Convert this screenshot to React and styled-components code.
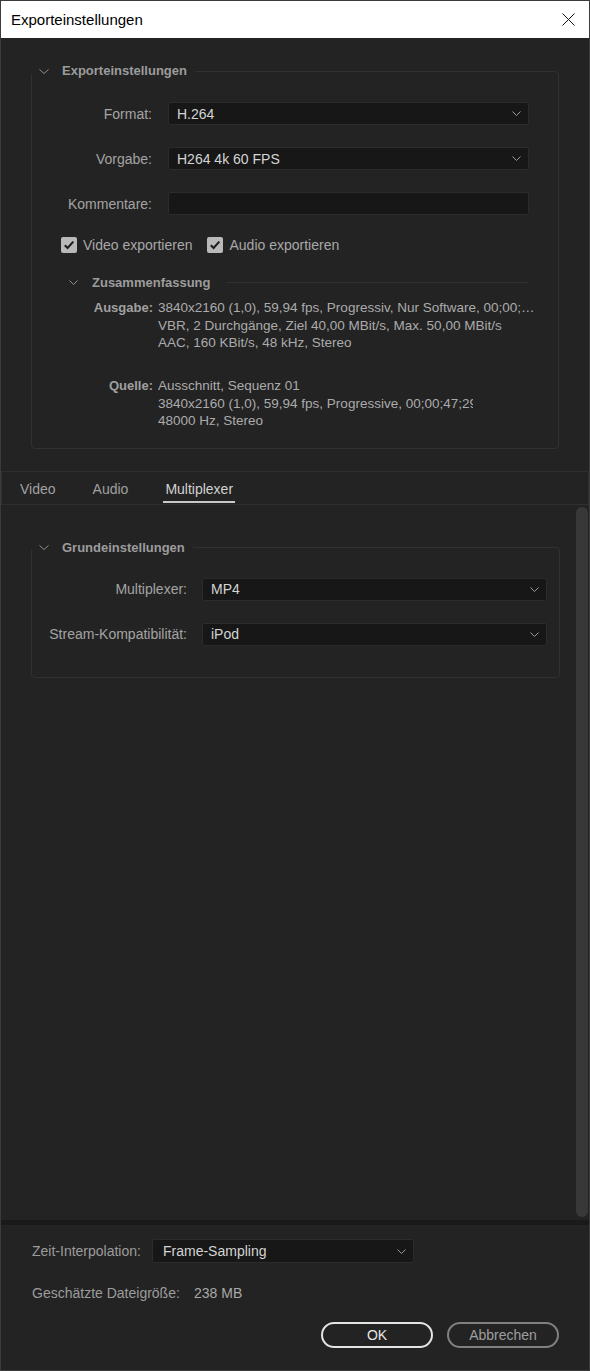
import React from "react";
import styled, { createGlobalStyle } from "styled-components";

const GlobalStyle = createGlobalStyle`
  html, body {
    margin: 0;
    padding: 0;
    background: #232323;
  }
  body {
    font-family: "Liberation Sans", Arial, sans-serif;
  }
  * {
    box-sizing: border-box;
  }
`;

const Window = styled.div`
  width: 590px;
  height: 1371px;
  border: 1px solid #3b3b3b;
  background: #232323;
  display: flex;
  flex-direction: column;
  overflow: hidden;
`;

const TitleBar = styled.div`
  height: 37px;
  flex-shrink: 0;
  background: #ffffff;
  display: flex;
  align-items: center;
  justify-content: space-between;
  padding: 0 14px 0 10px;
  font-size: 15px;
  color: #000;
`;

const TopSection = styled.div`
  padding: 25px 30px 0 30px;
  flex-shrink: 0;
`;

const Group = styled.fieldset`
  margin: 0;
  padding: 0;
  min-width: 0;
  border: 1px solid #313131;
  border-radius: 4px;
`;

const Legend = styled.legend`
  display: flex;
  align-items: center;
  gap: 13px;
  padding: 0 8px 0 7px;
  line-height: 16px;
  font-size: 13px;
  font-weight: 700;
  color: #9c9c9c;
`;

const FormGrid = styled.div`
  display: grid;
  grid-template-columns: ${(p) => p.$label}px 1fr;
  column-gap: ${(p) => p.$gap}px;
  row-gap: 22px;
  padding: ${(p) => p.$pad};
`;

const Label = styled.div`
  align-self: center;
  text-align: right;
  white-space: nowrap;
  font-size: 14px;
  color: #a3a3a3;
`;

const Select = styled.div`
  height: ${(p) => p.$h || 23}px;
  background: #171717;
  border: 1px solid #2b2b2b;
  border-radius: 2px;
  display: flex;
  align-items: center;
  justify-content: space-between;
  padding: 0 7px 0 ${(p) => p.$padLeft || 8}px;
  font-size: 14px;
  color: #d4d4d4;
  white-space: nowrap;
`;

const CheckRow = styled.div`
  display: flex;
  gap: 15px;
  margin-top: 22px;
  padding-left: 29px;
  height: 16px;
`;

const CheckItem = styled.label`
  display: flex;
  align-items: center;
  gap: 6px;
  font-size: 14px;
  line-height: 16px;
  color: #a8a8a8;
`;

const Box = styled.span`
  width: 16px;
  height: 16px;
  border-radius: 2px;
  background: #b9b9b9;
  display: flex;
  align-items: center;
  justify-content: center;
`;

const SummaryHeader = styled.div`
  display: flex;
  align-items: center;
  gap: 14px;
  height: 16px;
  margin-top: 21px;
  padding: 0 29px 0 37px;
`;

const SummaryTitle = styled.span`
  font-size: 13px;
  font-weight: 700;
  color: #9c9c9c;
  white-space: nowrap;
`;

const Rule = styled.div`
  flex: 1;
  height: 1px;
  margin-left: 2px;
  background: #303030;
`;

const SummaryGrid = styled.div`
  display: grid;
  grid-template-columns: 121px minmax(0, 1fr);
  column-gap: 5px;
  row-gap: 25.5px;
  margin-top: 9px;
  padding: 0 22px 18px 0;
  font-size: 13.5px;
  line-height: 17.5px;
`;

const SumLabel = styled.div`
  text-align: right;
  font-size: 13px;
  font-weight: 700;
  color: #a0a0a0;
`;

const SumValue = styled.div`
  min-width: 0;
  color: #ababab;
`;

const SumLine = styled.div`
  white-space: nowrap;
  overflow: hidden;
  text-overflow: ${(p) => (p.$clip ? "clip" : "ellipsis")};
  max-width: ${(p) => (p.$max ? `${p.$max}px` : "none")};
`;

const TabBar = styled.div`
  flex-shrink: 0;
  margin-top: 22px;
  height: 34px;
  border: 1px solid #2f2f2f;
  display: flex;
  padding-left: 16px;
`;

const Tab = styled.div`
  display: flex;
  align-items: center;
  padding: 6px 2px 0;
  margin-right: 33px;
  margin-bottom: 1px;
  border-bottom: 2px solid ${(p) => (p.$active ? "#c9c9c9" : "transparent")};
  font-size: 14px;
  color: ${(p) => (p.$active ? "#d2d2d2" : "#a0a0a0")};
`;

const ScrollArea = styled.div`
  flex: 1;
  min-height: 0;
  display: flex;
`;

const ScrollContent = styled.div`
  flex: 1;
  padding: 35px 16px 0 30px;
`;

const ScrollThumb = styled.div`
  width: 12px;
  margin: 2px 1px 3px 0;
  border-radius: 6px;
  background: #383838;
`;

const Separator = styled.div`
  height: 5px;
  flex-shrink: 0;
  background: #1a1a1a;
`;

const BottomArea = styled.div`
  flex-shrink: 0;
  padding: 14px 30px 22px 31px;
`;

const FieldRow = styled.div`
  display: grid;
  grid-template-columns: ${(p) => p.$cols};
  column-gap: ${(p) => p.$gap || 0}px;
  align-items: center;
  margin-top: ${(p) => p.$top || 0}px;
  font-size: 14px;
  line-height: 18px;
`;

const PlainLabel = styled.span`
  color: #9c9c9c;
  white-space: nowrap;
`;

const PlainValue = styled.span`
  color: #a8a8a8;
`;

const ButtonRow = styled.div`
  display: flex;
  justify-content: flex-end;
  gap: 14px;
  margin-top: 20px;
`;

const Button = styled.button`
  width: 112px;
  height: 26px;
  border-radius: 13px;
  background: transparent;
  border: 2px solid ${(p) => (p.$primary ? "#e4e4e4" : "#808080")};
  color: ${(p) => (p.$primary ? "#e6e6e6" : "#9e9e9e")};
  font-family: inherit;
  font-size: 14px;
  padding: 0;
`;

const Chevron = ({ color = "#9a9a9a", w = 9 }) => (
  <svg width={w} height="5" viewBox={`0 0 ${w} 5`}>
    <path
      d={`M0.5 0.5 L${w / 2} 4.5 L${w - 0.5} 0.5`}
      fill="none"
      stroke={color}
      strokeWidth="1"
    />
  </svg>
);

const CloseIcon = () => (
  <svg width="13" height="13" viewBox="0 0 13 13">
    <path d="M0.5 0.5 L12.5 12.5 M12.5 0.5 L0.5 12.5" stroke="#111" strokeWidth="1" />
  </svg>
);

const Check = () => (
  <Box>
    <svg width="12" height="12" viewBox="0 0 12 12">
      <path d="M1.8 6.2 L4.6 9 L10.3 2.6" fill="none" stroke="#1e1e1e" strokeWidth="2.1" />
    </svg>
  </Box>
);

const Dropdown = ({ value, ...rest }) => (
  <Select {...rest}>
    <span>{value}</span>
    <Chevron />
  </Select>
);

export default function App() {
  return (
    <>
      <GlobalStyle />
      <Window>
        <TitleBar>
          <span>Exporteinstellungen</span>
          <CloseIcon />
        </TitleBar>

        <TopSection>
          <Group>
            <Legend>
              <Chevron w={10} color="#8e8e8e" />
              Exporteinstellungen
            </Legend>
            <FormGrid $label={120} $gap={16} $pad="23px 29px 0 0">
              <Label>Format:</Label>
              <Dropdown value="H.264" />
              <Label>Vorgabe:</Label>
              <Dropdown value="H264 4k 60 FPS" />
              <Label>Kommentare:</Label>
              <Select />
            </FormGrid>
            <CheckRow>
              <CheckItem>
                <Check />
                Video exportieren
              </CheckItem>
              <CheckItem>
                <Check />
                Audio exportieren
              </CheckItem>
            </CheckRow>
            <SummaryHeader>
              <Chevron color="#8e8e8e" />
              <SummaryTitle>Zusammenfassung</SummaryTitle>
              <Rule />
            </SummaryHeader>
            <SummaryGrid>
              <SumLabel>Ausgabe:</SumLabel>
              <SumValue>
                <SumLine>3840x2160 (1,0), 59,94 fps, Progressiv, Nur Software, 00;00;47;29</SumLine>
                <SumLine>VBR, 2 Durchgänge, Ziel 40,00 MBit/s, Max. 50,00 MBit/s</SumLine>
                <SumLine>AAC, 160 KBit/s, 48 kHz, Stereo</SumLine>
              </SumValue>
              <SumLabel>Quelle:</SumLabel>
              <SumValue>
                <SumLine $clip $max={315}>Ausschnitt, Sequenz 01</SumLine>
                <SumLine $clip $max={315}>3840x2160 (1,0), 59,94 fps, Progressive, 00;00;47;29</SumLine>
                <SumLine $clip $max={315}>48000 Hz, Stereo</SumLine>
              </SumValue>
            </SummaryGrid>
          </Group>
        </TopSection>

        <TabBar>
          <Tab>Video</Tab>
          <Tab>Audio</Tab>
          <Tab $active>Multiplexer</Tab>
        </TabBar>

        <ScrollArea>
          <ScrollContent>
            <Group>
              <Legend>
                <Chevron w={10} color="#8e8e8e" />
                Grundeinstellungen
              </Legend>
              <FormGrid $label={155} $gap={15} $pad="22px 12px 31px 0">
                <Label>Multiplexer:</Label>
                <Dropdown value="MP4" />
                <Label>Stream-Kompatibilität:</Label>
                <Dropdown value="iPod" />
              </FormGrid>
            </Group>
          </ScrollContent>
          <ScrollThumb />
        </ScrollArea>

        <Separator />

        <BottomArea>
          <FieldRow $cols="114px 262px" $gap={6}>
            <PlainLabel>Zeit-Interpolation:</PlainLabel>
            <Dropdown value="Frame-Sampling" $h={24} $padLeft={10} />
          </FieldRow>
          <FieldRow $cols="162px auto" $top={21}>
            <PlainLabel>Geschätzte Dateigröße:</PlainLabel>
            <PlainValue>238 MB</PlainValue>
          </FieldRow>
          <ButtonRow>
            <Button $primary>OK</Button>
            <Button>Abbrechen</Button>
          </ButtonRow>
        </BottomArea>
      </Window>
    </>
  );
}
